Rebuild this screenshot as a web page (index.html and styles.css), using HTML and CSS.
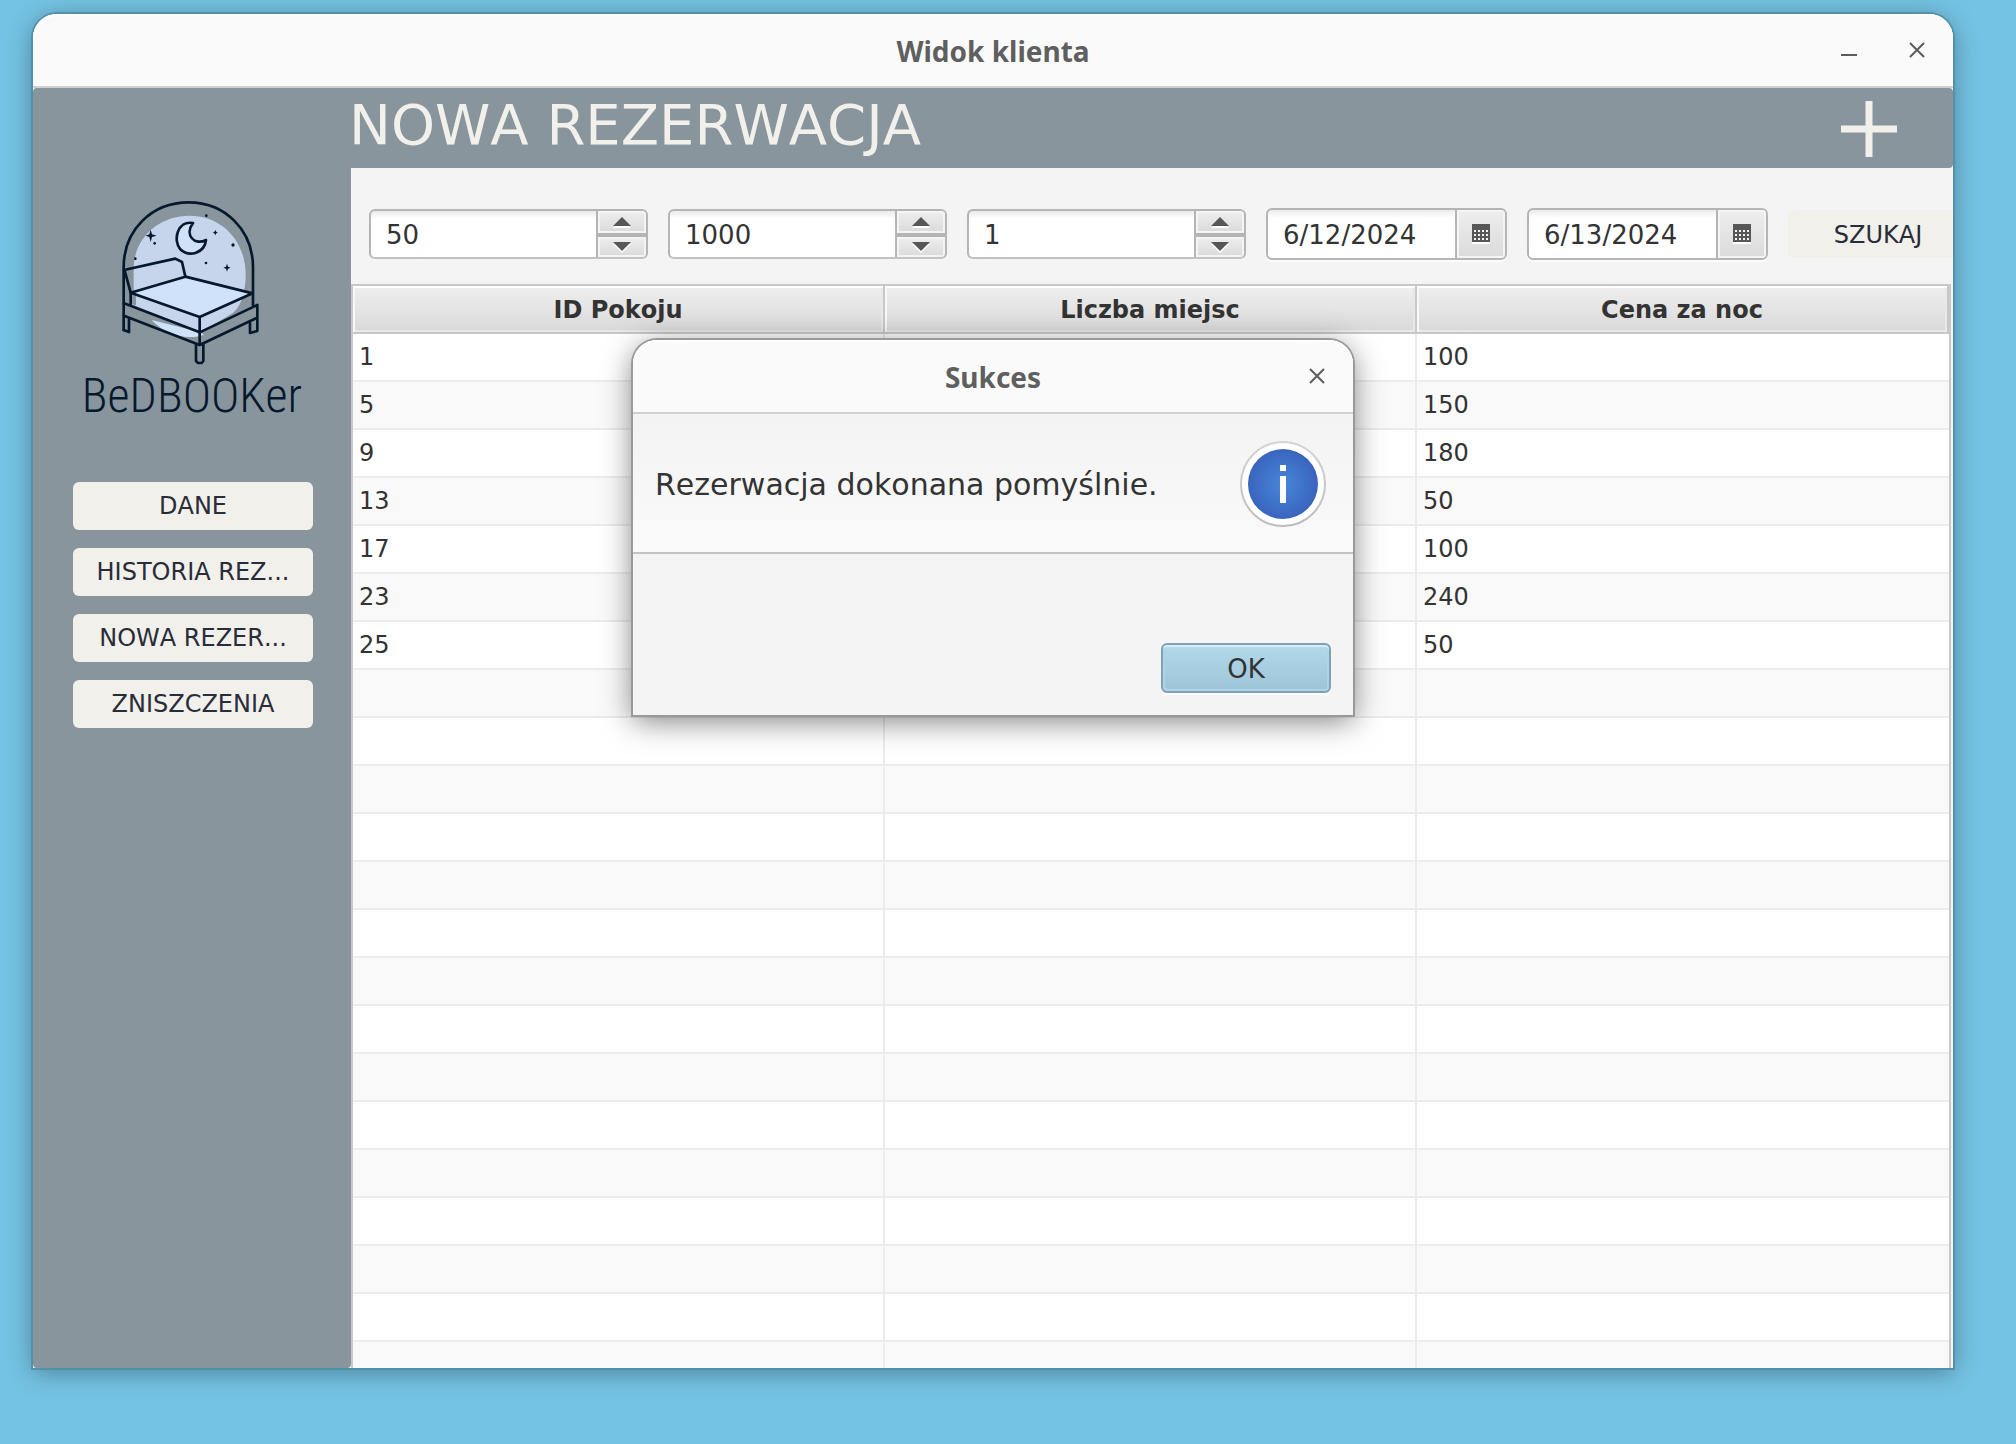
FILE: index.html
```html
<!DOCTYPE html>
<html lang="pl">
<head>
<meta charset="utf-8">
<title>Widok klienta</title>
<link rel="stylesheet" href="styles.css">
</head>
<body>
<div class="window">
  <div class="titlebar">
    <span class="titlebar-name">Widok klienta</span>
    <div class="titlebar-controls">
      <button class="control" aria-label="Minimalizuj"><svg width="16" height="16"><path d="M0 13H16"/></svg></button>
      <button class="control" aria-label="Zamknij"><svg width="16" height="16"><path d="M1 1L15 15M15 1L1 15"/></svg></button>
    </div>
  </div>

  <header class="header">
    <h1 class="header-title">NOWA REZERWACJA</h1>
    <button class="add" aria-label="Dodaj"><svg width="56" height="56"><path d="M28 0V56M0 28H56"/></svg></button>
  </header>

  <div class="body">
    <aside class="sidebar">
      <div class="logo">
        <svg class="logo-picture" viewBox="0 0 792 570" aria-hidden="true">
          <path d="M221 262C224 170 300 107 388 107C482 107 557 178 557 285C557 335 545 375 520 398L419 458L212 372V338L221 330Z" fill="#c6d5ec"/>
          <path d="M275 420C305 452 345 471 388 471C406 471 420 468 432 464L419 456Z" fill="#d0e2fa"/>
          <path d="M197 268L346 236L366 246L376 290L212 338Z" fill="#c6d5ec"/>
          <path d="M195 269L221 263V333L212 337Z" fill="#88959d"/>
          <path d="M212 338L376 290L578 340L419 411Z" fill="#d0e2fa"/>
          <path d="M212 340L228 345V376L212 372Z" fill="#88959d"/>
          <path d="M399 129C352 121 338 181 361 208C388 234 434 218 438 180C404 198 372 165 399 129Z" fill="#d0e2fa"/>
          <g class="logo-lines">
            <path d="M191 450V262C191 150 275 67 386 67C495 67 579 150 579 262V376"/>
            <path d="M192 270L346 236L366 246L376 290L212 338L194 272M212 338V372"/>
            <path d="M376 290L578 340L419 411L212 338M419 411V495"/>
            <path d="M192 370L419 457L592 375V453L570 459V428"/>
            <path d="M192 407L419 495L590 414M191 450L207 456V414"/>
            <path d="M408 494V543L414 549H425L430 543V491"/>
            <path d="M399 129C352 121 338 181 361 208C388 234 434 218 438 180C404 198 372 165 399 129Z"/>
          </g>
          <g fill="#06182c">
            <path d="M272 149L276 163L290 167L276 171L272 186L268 171L257 167L268 163Z"/>
            <path d="M501 251L504 260L512 263L504 266L501 275L498 266L490 263L498 260Z"/>
            <path d="M466 150L469 156L474 158L469 160L466 166L463 160L458 158L463 156Z"/>
            <circle cx="284" cy="190" r="4"/><circle cx="226" cy="236" r="4"/><circle cx="439" cy="107" r="4"/>
            <circle cx="519" cy="195" r="5"/><circle cx="438" cy="249" r="4"/>
          </g>
        </svg>
        <span class="logo-name">BeDBOOKer</span>
      </div>
      <nav class="menu">
        <button class="flat">DANE</button>
        <button class="flat">HISTORIA REZ...</button>
        <button class="flat">NOWA REZER...</button>
        <button class="flat">ZNISZCZENIA</button>
      </nav>
    </aside>

    <main class="content">
      <form class="filters">
        <div class="spinner">
          <input class="field" type="text" value="50" aria-label="Cena od">
          <div class="steps">
            <button class="step" type="button" aria-label="Więcej"><svg width="18" height="12"><path class="shine" d="M0 12L9 3L18 12Z"/><path d="M0 10L9 1L18 10Z"/></svg></button>
            <button class="step" type="button" aria-label="Mniej"><svg width="18" height="12"><path class="shine" d="M0 3H18L9 12Z"/><path d="M0 1H18L9 10Z"/></svg></button>
          </div>
        </div>
        <div class="spinner">
          <input class="field" type="text" value="1000" aria-label="Cena do">
          <div class="steps">
            <button class="step" type="button" aria-label="Więcej"><svg width="18" height="12"><path class="shine" d="M0 12L9 3L18 12Z"/><path d="M0 10L9 1L18 10Z"/></svg></button>
            <button class="step" type="button" aria-label="Mniej"><svg width="18" height="12"><path class="shine" d="M0 3H18L9 12Z"/><path d="M0 1H18L9 10Z"/></svg></button>
          </div>
        </div>
        <div class="spinner">
          <input class="field" type="text" value="1" aria-label="Liczba miejsc">
          <div class="steps">
            <button class="step" type="button" aria-label="Więcej"><svg width="18" height="12"><path class="shine" d="M0 12L9 3L18 12Z"/><path d="M0 10L9 1L18 10Z"/></svg></button>
            <button class="step" type="button" aria-label="Mniej"><svg width="18" height="12"><path class="shine" d="M0 3H18L9 12Z"/><path d="M0 1H18L9 10Z"/></svg></button>
          </div>
        </div>
        <div class="date">
          <input class="field" type="text" value="6/12/2024" aria-label="Data od">
          <button class="calendar" type="button" aria-label="Kalendarz"><svg width="18" height="20"><path class="shine" d="M0 2H18V20H0Z"/><path d="M0 0H18V18H0Z"/><path class="days" d="M2 7H16M2 11H16M2 15H16"/></svg></button>
        </div>
        <div class="date">
          <input class="field" type="text" value="6/13/2024" aria-label="Data do">
          <button class="calendar" type="button" aria-label="Kalendarz"><svg width="18" height="20"><path class="shine" d="M0 2H18V20H0Z"/><path d="M0 0H18V18H0Z"/><path class="days" d="M2 7H16M2 11H16M2 15H16"/></svg></button>
        </div>
        <button class="flat search" type="button">SZUKAJ</button>
      </form>

      <div class="table-view">
        <table class="rooms">
          <thead>
            <tr><th>ID Pokoju</th><th>Liczba miejsc</th><th>Cena za noc</th></tr>
          </thead>
          <tbody>
            <tr><td>1</td><td></td><td>100</td></tr>
            <tr><td>5</td><td></td><td>150</td></tr>
            <tr><td>9</td><td></td><td>180</td></tr>
            <tr><td>13</td><td></td><td>50</td></tr>
            <tr><td>17</td><td></td><td>100</td></tr>
            <tr><td>23</td><td></td><td>240</td></tr>
            <tr><td>25</td><td></td><td>50</td></tr>
            <tr><td></td><td></td><td></td></tr>
            <tr><td></td><td></td><td></td></tr>
            <tr><td></td><td></td><td></td></tr>
            <tr><td></td><td></td><td></td></tr>
            <tr><td></td><td></td><td></td></tr>
            <tr><td></td><td></td><td></td></tr>
            <tr><td></td><td></td><td></td></tr>
            <tr><td></td><td></td><td></td></tr>
            <tr><td></td><td></td><td></td></tr>
            <tr><td></td><td></td><td></td></tr>
            <tr><td></td><td></td><td></td></tr>
            <tr><td></td><td></td><td></td></tr>
            <tr><td></td><td></td><td></td></tr>
            <tr><td></td><td></td><td></td></tr>
            <tr><td></td><td></td><td></td></tr>
          </tbody>
        </table>
      </div>
    </main>
  </div>

  <div class="dialog" role="dialog" aria-labelledby="dialog-name">
    <div class="titlebar">
      <span class="titlebar-name" id="dialog-name">Sukces</span>
      <div class="titlebar-controls">
        <button class="control" aria-label="Zamknij"><svg width="16" height="16"><path d="M1 1L15 15M15 1L1 15"/></svg></button>
      </div>
    </div>
    <div class="dialog-header">
      <p class="dialog-message">Rezerwacja dokonana pomyślnie.</p>
      <svg class="dialog-icon" width="86" height="86" viewBox="0 0 86 86" aria-hidden="true">
        <defs>
          <radialGradient id="info"><stop offset="0" stop-color="#4787d8"/><stop offset="1" stop-color="#3a64bf"/></radialGradient>
          <linearGradient id="rim" x2="0" y2="1"><stop offset="0" stop-color="#d4d4d4"/><stop offset="1" stop-color="#bcbcbc"/></linearGradient>
        </defs>
        <circle cx="43" cy="43" r="42" fill="#fff" stroke="url(#rim)" stroke-width="2"/>
        <circle cx="43" cy="43" r="35" fill="url(#info)"/>
        <path d="M40 24H46V30H40ZM40 35H46V62H40Z" fill="#fff"/>
      </svg>
    </div>
    <div class="dialog-buttons">
      <button class="default">OK</button>
    </div>
  </div>
</div>
</body>
</html>
```
FILE: styles.css
```css
* { box-sizing: border-box; }

body {
  margin: 0;
  height: 100vh;
  padding: 14px 63px 76px 33px;
  background: #74c3e4;
  color: #333;
  font-family: "DejaVu Sans", sans-serif;
  font-size: 24px;
  font-kerning: none;
}

button, input {
  margin: 0;
  padding: 0;
  border: 0;
  font: inherit;
  font-kerning: none;
  color: inherit;
}

svg { display: block; }

.window {
  position: relative;
  display: flex;
  flex-direction: column;
  height: 100%;
  background: #fff;
  border-radius: 24px 24px 0 0;
  box-shadow: 0 0 0 2px #5590ab, 0 4px 26px rgba(0, 0, 0, 0.35);
}

/* Window frame */
.titlebar {
  display: grid;
  grid-template-columns: 1fr auto 1fr;
  align-items: center;
  flex: none;
  height: 74px;
  padding: 0 28px;
  background: #fafafa;
  border-bottom: 2px solid #d0d0d0;
  border-radius: 24px 24px 0 0;
  box-shadow: inset 0 2px #fff;
}

.titlebar-name {
  grid-column: 2;
  padding-top: 2px;
  color: #5f5f5f;
  font-family: "Noto Sans", sans-serif;
  font-size: 28px;
  font-weight: 700;
}

.titlebar-controls {
  display: flex;
  gap: 52px;
  justify-content: flex-end;
}

.control { background: none; }

.control path {
  stroke: #5c5c5c;
  stroke-width: 2;
  fill: none;
}

/* Section header */
.header {
  display: flex;
  justify-content: space-between;
  flex: none;
  height: 80px;
  padding: 2px 56px 0 316px;
  background: #88959d;
  border-radius: 4px 4px 4px 0;
  color: #f2f0eb;
}

.header-title {
  margin: 0;
  font-size: 56px;
  font-weight: 400;
  line-height: 70px;
}

.add { background: none; }

.add path {
  stroke: #f2f0eb;
  stroke-width: 7;
}

.body {
  display: flex;
  flex: 1;
  min-height: 0;
}

/* Sidebar */
.sidebar {
  flex: none;
  width: 318px;
  padding-top: 12px;
  background: #88959d;
  border-radius: 0 0 4px 4px;
}

.logo {
  display: flex;
  flex-direction: column;
  align-items: center;
}

.logo-picture {
  width: 264px;
  height: 190px;
}

.logo-lines {
  fill: none;
  stroke: #06182c;
  stroke-width: 8;
  stroke-linejoin: round;
  stroke-linecap: round;
}

.logo-name {
  color: #06182c;
  font-family: "Roboto Condensed", "Liberation Sans Narrow", "DejaVu Sans Condensed", sans-serif;
  font-size: 48px;
  font-weight: 300;
  line-height: 52px;
}

.menu {
  display: flex;
  flex-direction: column;
  gap: 18px;
  padding: 60px 38px 0 40px;
}

.flat {
  height: 48px;
  background: #f2f0eb;
  border-radius: 6px;
  color: #292c39;
}

/* Filters */
.content {
  display: flex;
  flex: 1;
  flex-direction: column;
  min-width: 0;
  overflow: hidden;
  background: #f4f4f4;
}

.filters {
  display: flex;
  align-items: center;
  gap: 20px;
  height: 116px;
  padding: 16px 0 0 18px;
  font-size: 26px;
}

.spinner, .date {
  display: flex;
  flex: none;
  overflow: hidden;
  background: #b5b5b5;
  border: 2px solid #b5b5b5;
  border-radius: 6px;
}

.spinner {
  width: 279px;
  height: 50px;
  border-bottom-color: #c2c2c2;
}

.date {
  width: 241px;
  height: 52px;
  box-shadow: 0 2px #fcfcfc;
}

.field {
  flex: 1;
  min-width: 0;
  padding: 2px 0 0 15px;
  background: linear-gradient(#ebebeb, #fff 8px);
}

.steps {
  display: grid;
  grid-template-rows: 22px 20px;
  gap: 4px;
  width: 50px;
  padding-left: 2px;
}

.step, .calendar {
  display: grid;
  place-items: center;
  background: linear-gradient(#eee, #dadada);
  box-shadow: inset 0 0 0 2px #f4f4f4;
  fill: #575757;
}

.calendar {
  width: 50px;
  border-left: 2px solid #b5b5b5;
}

.shine { fill: #fff; }

.days {
  stroke: #f4f4f4;
  stroke-width: 2;
  stroke-dasharray: 2;
}

.search {
  flex: none;
  width: 180px;
  padding-top: 2px;
  font-size: 24px;
}

/* Table */
.table-view {
  flex: 1;
  min-height: 0;
  margin-right: 2px;
  overflow: hidden;
  background: #fff;
  border: 2px solid #c8c8c8;
  border-bottom: 0;
}

.rooms {
  width: 100%;
  table-layout: fixed;
  border-collapse: separate;
  border-spacing: 0;
}

.rooms th {
  height: 48px;
  padding: 2px 0 0;
  background: linear-gradient(#efefef, #d9d9d9);
  border: 0 solid #c8c8c8;
  border-width: 0 2px 2px 0;
  box-shadow: inset 0 2px #fff, inset 2px 0 #f8f8f8, inset -2px -2px #e8e8e8;
}

.rooms td {
  height: 48px;
  padding: 0 0 0 6px;
  border: 0 solid #ececec;
  border-width: 0 2px 2px 0;
}

.rooms td:last-child { border-right: 0; }

.rooms tbody tr:nth-child(even) { background: #f9f9f9; }

/* Message dialog */
.dialog {
  position: absolute;
  top: 326px;
  left: 0;
  right: 0;
  width: 720px;
  margin: 0 auto;
  background: #f4f4f4;
  border-radius: 24px 24px 0 0;
  box-shadow: 0 0 0 2px #999, 0 6px 30px rgba(0, 0, 0, 0.5);
}

.dialog-header {
  display: flex;
  align-items: center;
  justify-content: space-between;
  height: 140px;
  padding: 2px 27px 0 22px;
  background: linear-gradient(#f3f3f3, #fafafa);
  border-bottom: 2px solid #c4c4c4;
}

.dialog-message {
  margin: 0;
  font-size: 30px;
}

.dialog-buttons {
  display: flex;
  justify-content: flex-end;
  padding: 89px 22px 22px;
}

.default {
  width: 170px;
  height: 50px;
  padding-top: 2px;
  background: linear-gradient(#b3daea, #9cc4d8);
  border: 2px solid #7fa3b4;
  border-radius: 6px;
  box-shadow: inset 0 2px #d5edf7, inset 2px -2px #aed5e6, inset -2px 0 #aed5e6, 0 2px #fcfcfc;
  font-size: 26px;
}
```
